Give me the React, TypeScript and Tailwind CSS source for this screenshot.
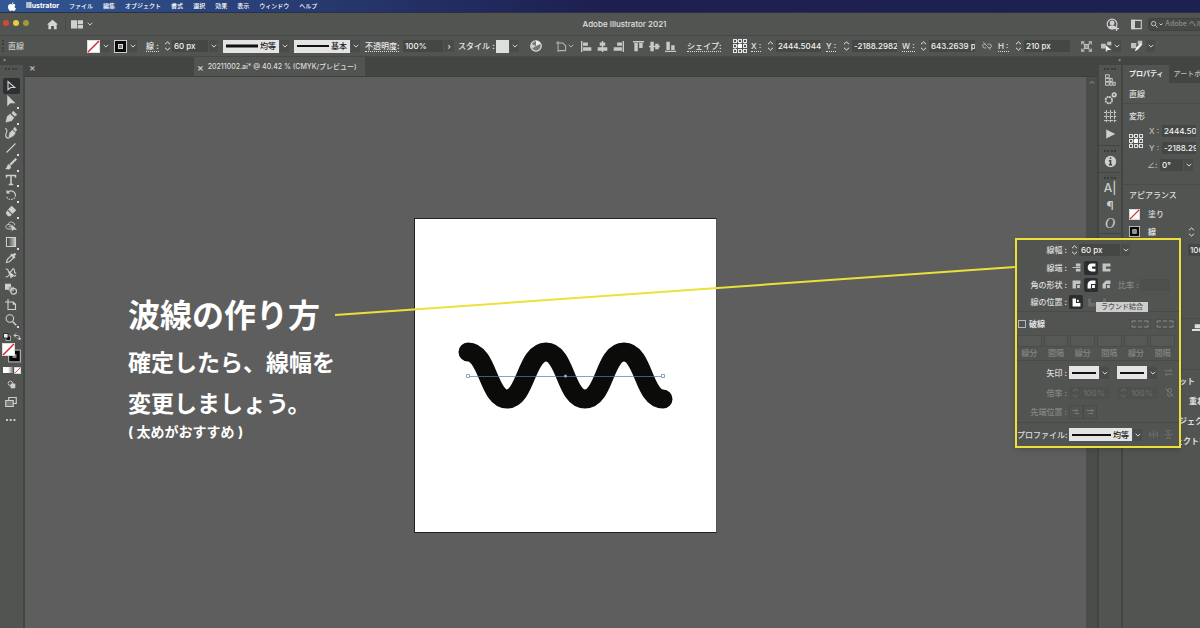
import type { ReactNode } from 'react';

const menuItems = ['ファイル', '編集', 'オブジェクト', '書式', '選択', '効果', '表示', 'ウィンドウ', 'ヘルプ'];

function Svg({ size = 12, box = 16, children }: { size?: number; box?: number; children: ReactNode }) {
  return (
    <svg
      width={size}
      height={size}
      viewBox={`0 0 ${box} ${box}`}
      fill="none"
      stroke="currentColor"
      strokeWidth="1.5"
      className="shrink-0"
      aria-hidden="true"
    >
      {children}
    </svg>
  );
}

function Chevron({ className = '' }: { className?: string }) {
  return (
    <button type="button" aria-label="開く" className={`flex h-3 w-[9px] shrink-0 items-center justify-center bg-[#4a4c4a] text-[#d5d5d5] ${className}`}>
      <svg width="6" height="4" viewBox="0 0 6 4" fill="none" stroke="currentColor">
        <path d="M.7.8 3 3.1 5.3.8" />
      </svg>
    </button>
  );
}

function Stepper({ className = 'w-[10px]' }: { className?: string }) {
  return (
    <button type="button" aria-label="増減" className={`flex h-3 shrink-0 items-center justify-center ${className}`}>
      <svg width="7" height="10" viewBox="0 0 7 10" fill="none" stroke="currentColor">
        <path d="M1 3.2 3.5.9 6 3.2M1 6.8l2.5 2.3L6 6.8" />
      </svg>
    </button>
  );
}

function Field({ label, value, className }: { label: string; value: string; className: string }) {
  return (
    <input
      aria-label={label}
      defaultValue={value}
      className={`h-3 min-w-0 shrink-0 bg-[#454745] pl-[2px] text-[#f2f2f2] outline-none ${className}`}
    />
  );
}

function StrokePick({ label, value, className, thick = 2 }: { label: string; value: string; className: string; thick?: number }) {
  return (
    <label className={`flex h-[13px] shrink-0 items-center gap-[2px] bg-[#e4e4e4] px-[3px] text-[#222] ${className}`}>
      <svg height="4" viewBox="0 0 30 4" preserveAspectRatio="none" className="min-w-0 flex-1">
        <path d="M0 2H30" stroke="#111" strokeWidth={thick} />
      </svg>
      {value !== '' && (
        <select aria-label={label} className="appearance-none bg-transparent outline-none">
          <option>{value}</option>
        </select>
      )}
    </label>
  );
}

function NoneSwatch({ size = 13 }: { size?: number }) {
  return (
    <svg width={size} height={size} viewBox="0 0 13 13" className="shrink-0">
      <rect x=".5" y=".5" width="12" height="12" fill="#fff" stroke="#ddd" />
      <path d="M1 12 12 1" stroke="#d8232a" strokeWidth="1.5" />
    </svg>
  );
}

function StrokeSwatch({ size = 13 }: { size?: number }) {
  return (
    <svg width={size} height={size} viewBox="0 0 13 13" className="shrink-0">
      <rect x=".5" y=".5" width="12" height="12" fill="#0b0b0b" stroke="#ccc" />
      <rect x="4.5" y="4.5" width="4" height="4" fill="#777" stroke="#ddd" />
    </svg>
  );
}

function RefPoint() {
  return (
    <Svg size={14} box={14}>
      <path d="M2 2h10v10H2zM2 7h10M7 2v10" strokeWidth="1" strokeDasharray="1 1" />
      <g fill="#525452" strokeWidth="1">
        {[2, 7, 12].map((x) =>
          [2, 7, 12].map((y) => <rect key={`${x}-${y}`} x={x - 1.5} y={y - 1.5} width="3" height="3" />),
        )}
      </g>
      <path d="M5 5h4v4H5z" fill="#fff" stroke="none" />
    </Svg>
  );
}

const tools: { name: string; more?: boolean; icon: ReactNode }[] = [
  { name: '選択', icon: <path d="M4 2v11l3.5-3H13z" /> },
  { name: 'ダイレクト選択', more: true, icon: <path d="M3 0v15l4-4h7z" fill="currentColor" stroke="none" /> },
  {
    name: 'ペン',
    more: true,
    icon: <path d="m1 15 2-8 4-3 5 5-3 4zM9 3l2-3 5 5-3 2z" fill="currentColor" strokeWidth=".5" />,
  },
  {
    name: '曲線',
    icon: (
      <>
        <path d="m5 15 1-7 4-4 4 4-3 4zM11 3l2-3 3 4-2 2z" fill="currentColor" strokeWidth=".5" />
        <path d="M0 2c5 1 1 6 1 9 0 2 1 4 4 4" />
      </>
    ),
  },
  { name: '直線', more: true, icon: <path d="M2 14 14 2" /> },
  {
    name: 'ブラシ',
    more: true,
    icon: (
      <>
        <path d="m7 9 8-8" strokeWidth="3" />
        <path d="M0 14c3 0 2-4 5-6l3 3c0 5-4 5-8 3z" fill="currentColor" stroke="none" />
      </>
    ),
  },
  { name: '文字', more: true, icon: <path d="M2 5V2h12v3M8 2v12M5 14h6" strokeWidth="2" /> },
  {
    name: '回転',
    more: true,
    icon: (
      <>
        <path d="M3 5c3-4 10-3 11 3" />
        <path d="M14 8c0 7-10 8-12 2" strokeDasharray="2 1.5" />
        <path d="M2 1v5h5z" fill="currentColor" stroke="none" />
      </>
    ),
  },
  {
    name: '消しゴム',
    more: true,
    icon: (
      <>
        <path d="m9 1 6 6-5 5-6-6z" fill="currentColor" stroke="none" />
        <path d="m3 7 6 6-2 2H4l-3-4z" fill="currentColor" stroke="none" />
      </>
    ),
  },
  {
    name: 'シェイプ形成',
    icon: (
      <>
        <path d="M9 12H4c-4-1-4-5 0-6 1-5 9-4 9 1M4 6c4 0 6 2 5 5M5 9h5" strokeWidth="1.2" />
        <path d="M9 6v9l2-2h5z" fill="currentColor" stroke="none" />
      </>
    ),
  },
  {
    name: 'グラデーション',
    more: true,
    icon: (
      <>
        <defs>
          <linearGradient id="toolGradient">
            <stop stopColor="#333" />
            <stop offset="1" stopColor="#ccc" />
          </linearGradient>
        </defs>
        <path d="M2 2h12v12H2z" fill="url(#toolGradient)" />
      </>
    ),
  },
  {
    name: 'スポイト',
    icon: (
      <>
        <path d="m2 14 1-4 6-6 3 3-6 6z" />
        <path d="m8 3 5 5M11 5l3-3" strokeWidth="3" />
      </>
    ),
  },
  {
    name: 'ワープ',
    icon: (
      <>
        <path d="M1 3c5-2 2 7 6 4s3-7 5-4-1 6 3 5M1 13c5 2 4-7 8-3s3 2 6 1" />
        <path d="M6 7l5 4-3 3z" fill="currentColor" />
      </>
    ),
  },
  {
    name: 'ブレンド',
    icon: (
      <>
        <path d="M0 1h8v8H0z" fill="currentColor" stroke="none" />
        <path d="M5 5h7v6H5z" fill="#999" stroke="none" />
        <circle cx="11.5" cy="11" r="3.8" />
      </>
    ),
  },
  { name: 'アートボード', icon: <path d="M4 0v4M0 4h4M4 4h7l3 3v7H4zM11 4v3h3" /> },
  {
    name: 'ズーム',
    more: true,
    icon: (
      <>
        <circle cx="6.5" cy="6" r="5" />
        <path d="m10 10 5 5" strokeWidth="2" />
      </>
    ),
  },
];

function MenuBar() {
  return (
    <nav className="flex h-[13px] shrink-0 items-center gap-[10px] border-b border-[#2b3140] bg-linear-to-r from-[#315895] via-[#1d1f50] to-[#1c2150] pl-2 text-[6px] font-medium text-white">
      <svg width="8" height="9" viewBox="0 0 16 18" fill="#fff" aria-label="Apple">
        <path d="M11 0c0 2-1 4-3 4 0-2 1-3 3-4zM8 5c1 0 2-1 4-1 1 0 2 1 3 2-3 2-2 6 1 7-1 3-3 5-4 5-2 0-2-1-4-1s-2 1-3 1C2 18 0 13 0 10c0-5 4-7 8-5z" />
      </svg>
      <a href="#app" className="text-[7px] font-bold">
        Illustrator
      </a>
      {menuItems.map((item) => (
        <a key={item} href="#menu" className="whitespace-nowrap">
          {item}
        </a>
      ))}
    </nav>
  );
}

function TitleBar() {
  return (
    <header className="flex h-[22px] shrink-0 items-center bg-[#525452]">
      <div className="flex w-[144px] shrink-0 items-center">
        <div className="flex w-[47px] gap-1 pb-[3px] pl-[3px]">
          <span className="size-[6px] rounded-full bg-[#d9463f]" />
          <span className="size-[6px] rounded-full bg-[#e3cf3a]" />
          <span className="size-[6px] rounded-full bg-[#a09b35]" />
        </div>
        <button type="button" aria-label="ホーム" className="text-[#d5d5d5]">
          <Svg size={11}>
            <path d="M8 1 0 8h2v7h4v-5h4v5h4V8h2z" fill="currentColor" stroke="none" />
          </Svg>
        </button>
        <span className="ml-[7px] h-[14px] w-px bg-[#484a48]" />
        <button type="button" aria-label="ワークスペース" className="ml-[5px] text-[#d0d0d0]">
          <Svg size={12}>
            <path d="M0 3h8v11H0zM9 3h7v5H9zM9 9h7v5H9z" fill="currentColor" stroke="none" />
          </Svg>
        </button>
        <button type="button" aria-label="ワークスペースの切り替え" className="ml-1 text-[#d0d0d0]">
          <svg width="6" height="4" viewBox="0 0 6 4" fill="none" stroke="currentColor">
            <path d="M.7.8 3 3.1 5.3.8" />
          </svg>
        </button>
      </div>
      <h1 className="flex-1 text-center text-[8px] text-[#e0e0e0]">Adobe Illustrator 2021</h1>
      <div className="flex w-[95px] shrink-0 items-center pl-px text-[#d0d0d0]">
        <button type="button" aria-label="アカウント">
          <Svg size={13}>
            <circle cx="7.5" cy="7.5" r="6" />
            <circle cx="7.5" cy="6" r="3" fill="currentColor" stroke="none" />
            <path d="M3 12c1-4 8-4 9 0l-4 2z" fill="currentColor" stroke="none" />
            <path d="M13 10v6M10 13h6" />
          </Svg>
        </button>
        <button type="button" aria-label="パネル" className="ml-3">
          <Svg size={11}>
            <path d="M1 2h14v12H1z" />
            <path d="M1 2h4v12H1z" fill="currentColor" />
          </Svg>
        </button>
        <label className="ml-[6px] flex h-[13px] min-w-0 flex-1 items-center gap-[1px] rounded-l-sm border border-r-0 border-[#404240] bg-[#474947] pl-[2px]">
          <Svg size={7}>
            <circle cx="6" cy="6" r="5" strokeWidth="2" />
            <path d="m10 10 5 5" strokeWidth="2" />
          </Svg>
          <svg width="4" height="3" viewBox="0 0 4 3" fill="none" stroke="currentColor" className="shrink-0">
            <path d="M.5.5 2 2 3.5.5" />
          </svg>
          <input
            aria-label="ヘルプを検索"
            placeholder="Adobe ヘルプを検索"
            className="min-w-0 flex-1 pl-px text-[7px] outline-none placeholder:text-[#8c8c8c]"
          />
        </label>
      </div>
    </header>
  );
}

const alignIcons = [
  { name: '左揃え', space: 'w-4', d: 'M0 0h2v16H0zM3 2h7v5H3zM3 9h12v5H3z' },
  { name: '水平中央', space: 'w-4', d: 'M7 0h2v16H7zM4 2h8v5H4zM1 9h14v5H1z' },
  { name: '右揃え', space: 'w-5', d: 'M14 0h2v16h-2zM6 2h7v5H6zM1 9h12v5H1z' },
  { name: '上揃え', space: 'w-4', d: 'M0 0h16v2H0zM2 3h5v12H2zM9 3h5v7H9z' },
  { name: '垂直中央', space: 'w-4', d: 'M0 7h16v2H0zM2 1h5v14H2zM9 4h5v8H9z' },
  { name: '下揃え', space: 'w-[22px]', d: 'M0 14h16v2H0zM2 1h5v12H2zM9 6h5v7H9z' },
];

function ControlBar() {
  const label = 'shrink-0 whitespace-nowrap';
  const dotted = 'border-b border-dotted border-[#ddd] leading-[9px]';
  return (
    <div className="flex h-[22px] shrink-0 items-center overflow-hidden border-y border-[#474947] bg-[#525452] text-[#e8e8e8]">
      <span className="ml-[2px] h-3 w-[6px] shrink-0 border-l-2 border-dotted border-[#3e403e]" />
      <span className={`w-[79px] text-[#c8c8c8] ${label}`}>直線</span>
      <NoneSwatch />
      <Chevron className="mr-[4px] ml-px" />
      <StrokeSwatch />
      <Chevron className="mr-[9px] ml-px" />
      <span className={`w-4 ${label}`}>
        <span className={dotted}>線 :</span>
      </span>
      <Stepper />
      <Field label="線幅" value="60 px" className="w-9" />
      <Chevron className="mr-[5px] ml-px" />
      <StrokePick label="可変線幅" value="均等" className="w-14" thick={3} />
      <Chevron className="mr-[5px] ml-px" />
      <StrokePick label="ブラシ" value="基本" className="w-14" />
      <Chevron className="mr-[5px] ml-px" />
      <span className={`w-[38px] ${label}`}>
        <span className={dotted}>不透明度:</span>
      </span>
      <Field label="不透明度" value="100%" className="w-10" />
      <button type="button" aria-label="不透明度スライダー" className="mr-1 ml-px h-3 w-[10px] bg-[#4a4c4a] text-center">
        ›
      </button>
      <span className={`w-[38px] ${label}`}>スタイル :</span>
      <span className="size-[13px] shrink-0 bg-[#dedede]" />
      <Chevron className="mr-[11px] ml-px" />
      <span className="w-[26px] shrink-0">
        <Svg size={12}>
          <circle cx="8" cy="8" r="7" fill="#777" />
          <path d="M8 8V1a7 7 0 0 1 6 4z" fill="#eee" stroke="none" />
          <path d="M8 8 2 5a7 7 0 0 0 0 7z" fill="#ccc" stroke="none" />
        </Svg>
      </span>
      <button type="button" aria-label="アートボードに整列" className="flex w-[25px] shrink-0 items-center gap-px text-[#b5b5b5]">
        <Svg size={11}>
          <path d="M3 0v16M0 3h10M3 3h7l4 4v7H3z" />
        </Svg>
        <svg width="6" height="4" viewBox="0 0 6 4" fill="none" stroke="currentColor">
          <path d="M.7.8 3 3.1 5.3.8" />
        </svg>
      </button>
      {alignIcons.map((icon) => (
        <button key={icon.name} type="button" aria-label={icon.name} className={`shrink-0 text-[#c8c8c8] ${icon.space}`}>
          <Svg size={11}>
            <path d={icon.d} fill="currentColor" stroke="none" />
          </Svg>
        </button>
      ))}
      <span className={`w-[46px] ${label}`}>
        <span className={dotted}>シェイプ:</span>
      </span>
      <span className="w-[18px] shrink-0">
        <RefPoint />
      </span>
      <span className={`w-[14px] ${label}`}>
        <span className={dotted}>X :</span>
      </span>
      <Stepper className="w-[11px]" />
      <Field label="X" value="2444.5044" className="mr-[5px] w-[45px]" />
      <span className={`w-[15px] ${label}`}>
        <span className={dotted}>Y :</span>
      </span>
      <Stepper className="w-[11px]" />
      <Field label="Y" value="-2188.2982" className="mr-[5px] w-[45px]" />
      <span className={`w-4 ${label}`}>
        <span className={dotted}>W :</span>
      </span>
      <Stepper className="w-[11px]" />
      <Field label="W" value="643.2639 px" className="mr-[7px] w-[46px]" />
      <span className="w-4 shrink-0 text-[#b5b5b5]">
        <Svg size={10}>
          <path d="M7 11H4a3 3 0 0 1 0-6h2M9 5h3a3 3 0 0 1 0 6h-2M2 2l12 12" />
        </Svg>
      </span>
      <span className={`w-[15px] ${label}`}>
        <span className={dotted}>H :</span>
      </span>
      <Stepper className="w-[11px]" />
      <Field label="H" value="210 px" className="mr-[11px] w-[46px]" />
      <button type="button" aria-label="変形" className="w-5 shrink-0 text-[#c0c0c0]">
        <Svg size={11}>
          <path d="M5 5h6v6H5z" fill="#999" />
          <path d="M1 1l4 4M15 1l-4 4M1 15l4-4M15 15l-4-4M1 5V1h4M11 1h4v4M1 11v4h4M15 11v4h-4" />
        </Svg>
      </button>
      <button type="button" aria-label="オブジェクトを選択" className="shrink-0 text-[#c0c0c0]">
        <Svg size={11}>
          <path d="M0 4h7v7H0zM9 1h6v5H9z" fill="currentColor" stroke="none" />
          <path d="M7 6v10l3-3h5z" fill="#eee" stroke="none" />
        </Svg>
      </button>
      <Chevron className="mr-[10px]" />
      <button type="button" aria-label="編集" className="shrink-0 text-[#c0c0c0]">
        <Svg size={12}>
          <path d="M0 4h7v7H0zM9 1h6v5H9z" fill="currentColor" stroke="none" />
          <path d="m5 15 2-5 6-6 2 2-6 7z" fill="#eee" stroke="none" />
        </Svg>
      </button>
      <Chevron className="ml-[3px]" />
    </div>
  );
}

function ToolPanel() {
  return (
    <aside className="flex w-[25px] shrink-0 flex-col border-r-2 border-[#434543] bg-[#525452] text-[#cfcfcf]">
      <div className="h-2 bg-[#434543] pl-[3px] text-[5px] leading-[7px] text-[#aaa]">»</div>
      <div className="mt-[3px] mb-2 ml-[5px] h-[2px] w-3 border-t-2 border-dotted border-[#393b39]" />
      <div className="flex h-[250px] flex-col">
        {tools.map((tool, i) => (
          <button
            key={tool.name}
            type="button"
            aria-label={tool.name}
            className={`ml-[3px] flex w-[17px] flex-1 items-center rounded-xs pl-[2px] ${i === 0 ? 'bg-[#2e3033]' : ''}`}
          >
            <Svg size={12}>{tool.icon}</Svg>
            {tool.more && <span className="size-[2px] self-end bg-[#ddd]" />}
          </button>
        ))}
      </div>
      <div className="mt-[5px] flex justify-between pr-[2px] pl-[3px]">
        <Svg size={8}>
          <path d="M6 6h9v9H6z" fill="#111" />
          <path d="M1 1h9v9H1z" fill="#eee" stroke="#111" />
        </Svg>
        <Svg size={8}>
          <path d="M2 5h7c3 0 4 2 4 7M6 1 2 5l4 4M9 10l4 4 3-4" strokeWidth="2" />
        </Svg>
      </div>
      <svg width="20" height="21" viewBox="0 0 20 21" className="mt-px ml-[2px] shrink-0" aria-label="塗りと線">
        <rect x="6.5" y="8" width="12" height="12" fill="#525452" stroke="#aaa" strokeWidth="1" />
        <rect x="9" y="10.500" width="7" height="7" fill="#888" stroke="#050505" strokeWidth="3" />
        <rect x=".5" y="1.500" width="12" height="12" fill="#fff" stroke="#ddd" />
        <path d="M1 13 12 2" stroke="#d8232a" strokeWidth="1.5" />
      </svg>
      <div className="mt-[4px] flex pl-[3px]">
        <span className="h-[6px] w-[5px] bg-white" />
        <span className="h-[6px] w-[5px] bg-linear-to-r from-white to-[#777]" />
        <span className="ml-px">
          <NoneSwatch size={7} />
        </span>
      </div>
      <div className="flex flex-col items-center gap-[7px] pt-[6px] pr-px">
        <Svg size={9}>
          <circle cx="6" cy="6" r="4" />
          <path d="M7 7h7v7H7z" fill="currentColor" />
        </Svg>
        <Svg size={12}>
          <path d="M5 2h10v8H5z" />
          <path d="M1 6h10v8H1z" fill="#777" />
        </Svg>
        <Svg size={10}>
          <path d="M0 8h3M6 8h3M12 8h3" strokeWidth="3" />
        </Svg>
      </div>
    </aside>
  );
}

function Artboard() {
  return (
    <div className="mt-[141px] h-[315px] w-[303px] shrink-0 border border-[#222] border-r-[#555] bg-white">
      <svg width="301" height="313" viewBox="415 219 301 313" aria-label="波線">
        <path
          d="M468 352C488 352 488 399 507 399S526 352 546 352 565 399 585 399 604 352 624 352 643 399 663 399"
          fill="none"
          stroke="#0b0b09"
          strokeWidth="19"
          strokeLinecap="round"
        />
        <path d="M468 376.5H664" stroke="#5b7bb5" strokeOpacity=".7" />
        <g fill="#fff" stroke="#8fa0c4">
          <path d="M466.5 374.5h3v3h-3zM661.500 374.5h3v3h-3z" />
        </g>
        <circle cx="565.5" cy="376" r="1.5" fill="#8fb0e6" />
      </svg>
    </div>
  );
}

function Document() {
  return (
    <div className="flex min-w-0 flex-1 flex-col">
      <div className="flex h-5 shrink-0 items-center border-b border-[#3c3e3c] bg-[#434543] text-[#dcdcdc]">
        <button type="button" aria-label="閉じる" className="w-[169px] pl-1 text-left text-[10px] text-[#c0c0c0]">
          ×
        </button>
        <div className="flex h-full items-center gap-1 bg-[#525452] pr-2 pl-[3px] whitespace-nowrap">
          <button type="button" aria-label="書類を閉じる" className="text-[10px]">
            ×
          </button>
          <span className="text-[7px] font-medium">20211002.ai* @ 40.42 % (CMYK/プレビュー)</span>
        </div>
      </div>
      <div className="flex min-h-0 flex-1">
        <main className="flex min-w-0 flex-1 items-start overflow-hidden bg-[#5e5e5e]">
          <section className="mt-[218px] ml-[103px] w-[286px] shrink-0 font-bold whitespace-nowrap text-white">
            <h2 className="text-[32px] leading-[42px]">波線の作り方</h2>
            <p className="mt-[6px] text-[23px] leading-[41px]">
              確定したら、線幅を
              <br />
              変更しましょう。
            </p>
            <p className="text-[14px] leading-[14px]">( 太めがおすすめ )</p>
          </section>
          <Artboard />
        </main>
        <div className="w-[11px] shrink-0 bg-[#4b4d4b] pl-[3px] text-[#999]">
          <svg width="6" height="10" viewBox="0 0 6 10" fill="none" stroke="currentColor">
            <path d="M1 6.5 3 4.5l2 2" />
          </svg>
        </div>
      </div>
    </div>
  );
}

function Grip() {
  return <span className="h-[2px] w-3 border-t-2 border-dotted border-[#393b39]" />;
}

function IconDock() {
  const cell = 'flex h-[18px] items-center justify-center';
  return (
    <aside className="flex w-[26px] shrink-0 flex-col border-x-2 border-[#434543] bg-[#525452] text-[#cfcfcf]">
      <div className="h-2 bg-[#434543] text-right text-[5px] leading-[7px] text-[#aaa]">«</div>
      <div className="flex flex-col items-center pt-[3px] pb-[2px]">
        <Grip />
        <button type="button" aria-label="アセット" className={`mt-px ${cell}`}>
          <Svg size={12}>
            <path d="M2 1h5v4H2zM2 6h5v4H2zM2 11h5v4H2zM8 6h3v4H8zM8 11h3v4H8zM12 11h3v4h-3z" strokeWidth="1.2" />
          </Svg>
        </button>
        <button type="button" aria-label="アクション" className={cell}>
          <Svg size={13}>
            <circle cx="6" cy="10" r="4" strokeWidth="2.2" strokeDasharray="2.4 .7" />
            <circle cx="12.5" cy="3.500" r="2.2" strokeWidth="2" />
          </Svg>
        </button>
        <button type="button" aria-label="整列" className={cell}>
          <Svg size={13}>
            <path d="M3 0v16M8 0v16M13 0v16M0 3h16M0 8h16M0 13h16" strokeDasharray="3 1" strokeWidth="1.2" />
          </Svg>
        </button>
        <button type="button" aria-label="再生" className={cell}>
          <Svg size={12}>
            <path d="m3 2 12 6-12 6z" fill="currentColor" stroke="none" />
          </Svg>
        </button>
      </div>
      <div className="flex flex-col items-center border-t border-[#434543] pt-[4px] pb-[2px]">
        <Grip />
        <button type="button" aria-label="情報" className={cell}>
          <Svg size={13}>
            <circle cx="8" cy="8" r="7" fill="currentColor" stroke="none" />
            <path d="M8 3v2M6 7h2v5M6 12h4" stroke="#444" strokeWidth="2" />
          </Svg>
        </button>
      </div>
      <div className="flex flex-col items-center border-t border-[#434543] pt-1">
        <Grip />
        <button type="button" className={`text-[12px] ${cell}`}>A|</button>
        <button type="button" className={`text-[12px] ${cell}`}>¶</button>
        <button type="button" className={`font-['Liberation_Serif',serif] text-[14px] italic ${cell}`}>O</button>
      </div>
      <div className="border-t border-[#434543]" />
    </aside>
  );
}

function PropertiesPanel() {
  const quick = 'block whitespace-nowrap text-left font-bold';
  return (
    <aside className="w-[77px] shrink-0 overflow-hidden bg-[#525452] text-[#dedede]">
      <div className="h-2 bg-[#434543]" />
      <div className="flex h-[18px] items-stretch bg-[#434543] whitespace-nowrap text-[7px]">
        <button type="button" className="shrink-0 bg-[#525452] pr-[5px] pl-[6px] font-bold text-[#eee]">
          プロパティ
        </button>
        <button type="button" className="shrink-0 pl-[5px] text-[#bbb]">
          アートボード
        </button>
      </div>
      <h3 className="h-[21px] border-b border-[#4a4c4a] pl-[6px] leading-[22px]">直線</h3>
      <div className="h-[81px] border-b border-[#4a4c4a] pl-[6px]">
        <h3 className="leading-[24px]">変形</h3>
        <div className="-mt-[3px] flex">
          <div className="w-[18px] pt-[9px]">
            <RefPoint />
          </div>
          <div className="flex flex-col gap-[5px]">
            <div className="flex items-center">
              <span className="w-[15px] shrink-0 pl-[2px] leading-3 text-[#bbb]">X :</span>
              <Field label="X位置" value="2444.5044" className="w-[34px]" />
            </div>
            <div className="flex items-center">
              <span className="w-[15px] shrink-0 pl-[2px] leading-3 text-[#bbb]">Y :</span>
              <Field label="Y位置" value="-2188.2982" className="w-[34px]" />
            </div>
            <div className="flex items-center">
              <span className="w-[13px] shrink-0 leading-3 text-[#bbb]">∠:</span>
              <Field label="角度" value="0°" className="mr-px w-[23px]" />
              <Chevron />
            </div>
          </div>
        </div>
      </div>
      <div className="h-[134px] border-b border-[#4a4c4a] pl-[6px]">
        <h3 className="leading-[21px]">アピアランス</h3>
        <div className="flex h-[16px] items-center gap-2">
          <NoneSwatch size={11} />
          塗り
        </div>
        <div className="flex h-[19px] items-center gap-2 font-bold">
          <StrokeSwatch size={11} />
          <span className="w-[30px]">線</span>
          <Stepper />
        </div>
        <div className="flex h-[17px] items-center pl-[59px]">
          <Field label="不透明" value="100%" className="w-[30px]" />
        </div>
      </div>
      <div className="flex h-[51px] items-start border-b border-[#4a4c4a] pt-px pl-[69px]">
        <Svg size={11}>
          <path d="M0 13h16v3H0zM4 6h9v6H4z" fill="currentColor" stroke="none" />
        </Svg>
      </div>
      <div className="pt-px leading-[20px]">
        <button type="button" className={`${quick} ml-[8px]`}>パスのオフセット</button>
        <button type="button" className={`${quick} ml-[66px]`}>重ね順</button>
        <button type="button" className={`${quick} ml-[40px]`}>オブジェクトを一括選択</button>
        <button type="button" className={`${quick} ml-[28px]`}>オブジェクトを再配色</button>
      </div>
    </aside>
  );
}

type CapKind = { name: string; d: string; on?: boolean; off?: boolean };

const caps: CapKind[] = [
  { name: 'なし', d: 'M7 1h8v5H7zM1 7h14v2H1zM7 10h8v5H7z' },
  { name: '丸型', d: 'M8 1h7v5H9v4h6v5H8C-1 15-1 1 8 1z', on: true },
  { name: '突出', d: 'M1 1h14v5H7v4h8v5H1z' },
];
const joins: CapKind[] = [
  { name: 'マイター', d: 'M1 1h14v6H7v8H1zM9 9h5v5H9z' },
  { name: 'ラウンド', d: 'M9 1h6v6H7v8H1V9c0-5 3-8 8-8zM9 9h5v5H9z', on: true },
  { name: 'ベベル', d: 'M7 1h8v6H7v8H1V7zM9 9h5v5H9z' },
];
const positions: CapKind[] = [
  { name: '中央', d: 'M1 1h6v8h8v6H1zM9 3h3v4H9z', on: true },
  { name: '内側', d: 'M2 1h5v8h8v6H2z', off: true },
  { name: '外側', d: 'M2 1h5v8h8v6H2z', off: true },
];

function IconChoices({ items }: { items: CapKind[] }) {
  return (
    <div className="flex gap-px">
      {items.map((item) => (
        <button
          key={item.name}
          type="button"
          aria-label={item.name}
          className={`flex size-[14px] items-center justify-center rounded-xs ${
            item.on ? 'bg-[#2b2d30] text-white' : item.off ? 'text-[#6a6c6a]' : 'text-[#c4c4c4]'
          }`}
        >
          <Svg size={9}>
            <path d={item.d} fill="currentColor" stroke="none" />
          </Svg>
        </button>
      ))}
    </div>
  );
}

function PanelRow({ label, height, dim, children }: { label: string; height: string; dim?: boolean; children: ReactNode }) {
  return (
    <div className={`flex items-center ${height} ${dim ? 'text-[#858785]' : 'text-[#dedede]'}`}>
      <span className="mr-[2px] w-[50px] shrink-0 text-right whitespace-nowrap">{label}</span>
      {children}
    </div>
  );
}

function StrokePanel() {
  return (
    <section
      aria-label="線"
      className="absolute top-[181px] right-[19px] w-[166px] border-2 border-[#ebe13a] bg-[#525452] pt-px shadow-md"
    >
      <PanelRow label="線幅 :" height="h-[18px]">
        <Stepper />
        <Field label="線幅" value="60 px" className="mr-px w-[41px]" />
        <Chevron />
      </PanelRow>
      <PanelRow label="線端 :" height="h-[17px]">
        <IconChoices items={caps} />
      </PanelRow>
      <PanelRow label="角の形状 :" height="h-[17px]">
        <IconChoices items={joins} />
        <span className="ml-[5px] w-[22px] shrink-0 text-[#858785]">比率 :</span>
        <input aria-label="比率" disabled className="h-3 w-[30px] bg-[#4d4f4d]" />
      </PanelRow>
      <PanelRow label="線の位置 :" height="h-[18px]">
        <IconChoices items={positions} />
      </PanelRow>
      <span role="tooltip" className="absolute top-[62px] left-[79px] z-10 bg-[#cdcdcd] px-[5px] text-[7px] leading-[10px] whitespace-nowrap text-[#555]">
        ラウンド結合
      </span>
      <div className="flex h-6 items-center border-t border-[#494b49] pl-px">
        <label className="flex items-center gap-[3px] font-bold text-[#e8e8e8]">
          <input type="checkbox" className="size-[8px] appearance-none border border-[#b8b8b8]" />
          破線
        </label>
        <div className="ml-auto flex gap-1 pr-[3px] text-[#888]">
          {['線分と間隔を保持', 'コーナーに整列'].map((name) => (
            <button key={name} type="button" aria-label={name} className="border border-[#4b4d4b]">
              <svg width="19" height="8" viewBox="0 0 19 8" fill="none" stroke="currentColor">
                <path d="M1 3V1h4M7 1h4M13 1h4v2M17 5v2h-4M11 7H7M5 7H1V5" />
              </svg>
            </button>
          ))}
        </div>
      </div>
      <div className="grid h-[26px] grid-cols-6 gap-x-[2px] border-b border-[#494b49] pr-1 text-center text-[#858785]">
        {['線分', '間隔', '線分', '間隔', '線分', '間隔'].map((name, i) => (
          <label key={i} className="flex flex-col leading-[12px]">
            <input disabled className="h-3 w-full min-w-0 border border-[#4b4d4b] bg-[#565856]" />
            {name}
          </label>
        ))}
      </div>
      <PanelRow label="矢印 :" height="h-[23px]">
        <StrokePick label="始点" value="" className="w-[30px]" />
        <Chevron className="mr-2 ml-px" />
        <StrokePick label="終点" value="" className="w-[30px]" />
        <Chevron className="mr-[7px] ml-px" />
        <span className="text-[#7d7f7d]">
          <Svg size={9}>
            <path d="M1 5h13M11 2l3 3M15 11H2M5 14l-3-3" />
          </Svg>
        </span>
      </PanelRow>
      <PanelRow label="倍率 :" height="h-[17px]" dim>
        {['始点の倍率', '終点の倍率'].map((name) => (
          <div key={name} className="mr-[7px] flex bg-[#4e504e] text-[#6c6e6c]">
            <Stepper className="w-3" />
            <input aria-label={name} disabled defaultValue="100%" className="h-3 w-[29px] pl-[2px]" />
          </div>
        ))}
        <Svg size={9}>
          <path d="M5 7V4c0-4 6-4 6 0v3M5 9v3c0 4 6 4 6 0V9M1 1l14 14" />
        </Svg>
      </PanelRow>
      <PanelRow label="先端位置 :" height="h-[21px]" dim>
        {['M1 5h10M8 2l3 3-3 3M5 11h9', 'M1 5h13M11 2l3 3-3 3M5 11h9'].map((d, i) => (
          <button key={i} type="button" aria-label={`先端位置${i + 1}`} className="flex h-[14px] w-[14px] items-center justify-center border border-[#4a4c4a]">
            <Svg size={8}>
              <path d={d} />
            </Svg>
          </button>
        ))}
      </PanelRow>
      <div className="border-t border-[#494b49]">
        <PanelRow label="プロファイル:" height="h-[23px]">
          <StrokePick label="プロファイル" value="均等" className="w-[63px]" />
          <Chevron className="mr-[7px] ml-px" />
          <div className="flex gap-[6px] text-[#7d7f7d]">
            <Svg size={9}>
              <path d="M1 4v8l5-4zM15 4v8l-5-4zM8 1v14" strokeWidth="1" />
            </Svg>
            <Svg size={9}>
              <path d="M4 1h8L8 6zM4 15h8l-4-5zM1 8h14" strokeWidth="1" />
            </Svg>
          </div>
        </PanelRow>
      </div>
    </section>
  );
}

export default function App() {
  return (
    <div className="flex h-screen flex-col overflow-hidden bg-[#525452] font-[Inter,'Noto_Sans_CJK_JP',sans-serif] text-[8px] leading-[12px] font-medium">
      <MenuBar />
      <TitleBar />
      <ControlBar />
      <div className="relative flex min-h-0 flex-1">
        <ToolPanel />
        <Document />
        <IconDock />
        <PropertiesPanel />
        {/* leader line from the caption to the stroke panel */}
        <svg
          viewBox="0 0 680 50"
          preserveAspectRatio="none"
          className="pointer-events-none absolute top-[209px] right-[185px] left-[335px] h-[50px] w-[calc(100%-520px)]"
        >
          <path d="M0 49 680 1" stroke="#ebe13a" strokeWidth="2" />
        </svg>
        <StrokePanel />
      </div>
    </div>
  );
}
